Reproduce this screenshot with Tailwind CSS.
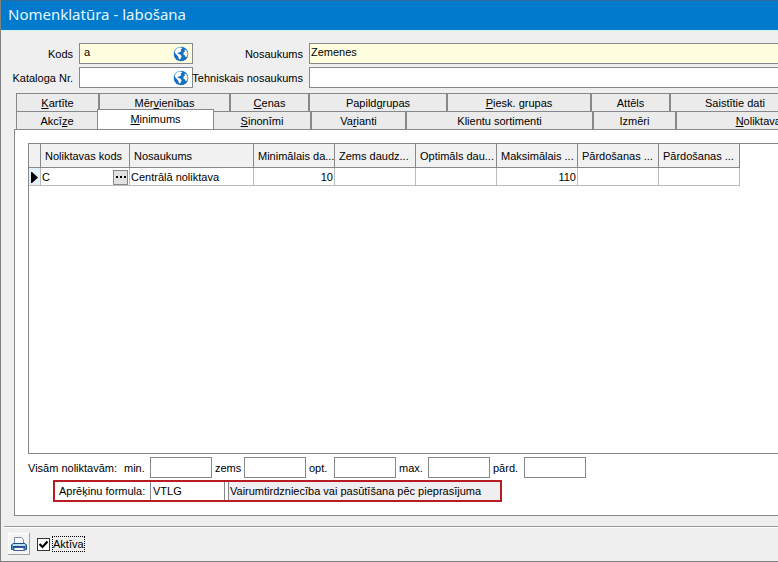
<!DOCTYPE html>
<html lang="lv">
<head>
    <meta charset="UTF-8" />
    <meta name="viewport" content="width=device-width, initial-scale=1.0">
    <title>Nomenklatūra - labošana</title>
    <script src="https://cdn.jsdelivr.net/npm/@tailwindcss/browser@4"></script>
</head>
<body class="h-screen overflow-hidden font-['Liberation_Sans',sans-serif] text-[11px] leading-4 text-black">

    <svg class="hidden">
        <symbol id="globe" viewBox="0 0 16 16">
            <circle cx="8" cy="8" r="7.3" fill="#1a70c0" />
            <path fill="#fff" d="M3.200 3 5.600 1.500 8.400 1.600 9.200 2.800 7.600 3.600 8.200 5 6.800 6.200 5.400 6.400 4.600 7.600 7 8.600 8.600 10 8 12 6.800 13.800 5.800 12.600 5.200 10.600 3.600 8.800 2 7 2 5z" />
            <path fill="#fff" d="M11.400 3.400 13.200 4.200 14.400 6.400 14.600 8.600 13.800 10.800 12.600 11 12 9.400 10.400 8.400 10.600 6.600 12 5.600z" />
        </symbol>
    </svg>

    <div class="flex h-full flex-col border-b border-l border-[#808080] bg-[#efefef]">
        <header class="h-[30px] shrink-0 border-t border-[#2f6a9c] bg-[#007acc] px-[7px]">
            <h1 class="font-['Noto_Sans',sans-serif] text-[15px] leading-[26px] text-[#e4f7ff]">Nomenklatūra - labošana</h1>
        </header>

        <form class="flex min-h-0 flex-1 flex-col border-t border-[#ccf6ff] pt-3">
            <div class="grid shrink-0 grid-cols-[72px_114px_104px_1fr] items-center gap-x-[6px] gap-y-[3px]">
                <label for="kods" class="text-right">Kods</label>
                <div class="flex h-[21px] items-center border border-[#85888c] bg-[#ffffdf] pr-[3px]">
                    <input id="kods" type="text" value="a" class="h-full w-full min-w-0 px-1 pb-1 outline-none">
                    <svg class="size-4 shrink-0"><use href="#globe" /></svg>
                </div>
                <label for="nosaukums" class="text-right whitespace-nowrap">Nosaukums</label>
                <input id="nosaukums" type="text" value="Zemenes" class="h-[21px] w-full border border-r-0 border-[#85888c] bg-[#ffffdf] px-px pb-1 outline-none">

                <label for="katalogs" class="text-right whitespace-nowrap">Kataloga Nr.</label>
                <div class="flex h-[21px] items-center border border-[#85888c] bg-white pr-[3px]">
                    <input id="katalogs" type="text" class="h-full w-full min-w-0 px-1 outline-none">
                    <svg class="size-4 shrink-0"><use href="#globe" /></svg>
                </div>
                <label for="tehniskais" class="flex justify-end whitespace-nowrap">Tehniskais nosaukums</label>
                <input id="tehniskais" type="text" class="h-[21px] w-full border border-r-0 border-[#85888c] bg-white px-px outline-none">
            </div>

            <nav class="mt-[5px] shrink-0 overflow-hidden pl-[15px]">
                <div class="flex h-[18px] *:shrink-0 *:border-t *:border-r-2 *:border-[#85888c] *:bg-[#ebebeb] *:text-center *:leading-[18px]">
                    <button type="button" class="w-[84px] border-l"><u>K</u>artīte</button>
                    <button type="button" class="w-[131px]">Mēr<u>v</u>ienības</button>
                    <button type="button" class="w-[79px]"><u>C</u>enas</button>
                    <button type="button" class="w-[138px]">Papild<u>g</u>rupas</button>
                    <button type="button" class="w-[144px]"><u>P</u>iesk. grupas</button>
                    <button type="button" class="w-[79px]">Attēls</button>
                    <button type="button" class="w-[130px]">Saistītie dati</button>
                </div>
                <div class="flex h-[18px] *:shrink-0 *:border-t *:border-r-2 *:border-[#85888c] *:text-center *:leading-[18px]">
                    <button type="button" class="w-[81px] border-r-0! border-l bg-[#ebebeb]">Akcī<u>z</u>e</button>
                    <button type="button" class="relative z-10 -mt-[2px] h-[21px] w-[117px] border-x! bg-white pb-1"><u>M</u>inimums</button>
                    <button type="button" class="w-[98px] bg-[#ebebeb]"><u>S</u>inonīmi</button>
                    <button type="button" class="w-[95px] bg-[#ebebeb]">Va<u>r</u>ianti</button>
                    <button type="button" class="w-[187px] bg-[#ebebeb]">Klientu sortimenti</button>
                    <button type="button" class="w-[83px] bg-[#ebebeb]">Izmēri</button>
                    <button type="button" class="w-[170px] bg-[#ebebeb]"><u>N</u>oliktavas</button>
                </div>
            </nav>

            <main class="ml-[13px] flex min-h-0 flex-1 flex-col border border-r-0 border-[#85888c] bg-white pt-[13px] pb-[13px] pl-[13px]">
                <div class="min-h-0 flex-1 overflow-hidden border border-r-0 border-[#85888c]">
                    <table class="w-[711px] table-fixed border-separate border-spacing-0">
                        <colgroup>
                            <col class="w-3"><col class="w-[89px]"><col class="w-[124px]"><col class="w-[81px]"><col class="w-[81px]"><col class="w-[81px]"><col class="w-[81px]"><col class="w-[81px]"><col class="w-[81px]">
                        </colgroup>
                        <thead>
                            <tr class="h-6 bg-[#f1f1f1] text-left *:overflow-hidden *:border-r *:border-b *:border-[#85888c] *:pt-px *:pl-1 *:font-normal *:whitespace-nowrap">
                                <th></th>
                                <th>Noliktavas kods</th>
                                <th>Nosaukums</th>
                                <th>Minimālais da...</th>
                                <th>Zems daudz...</th>
                                <th>Optimāls dau...</th>
                                <th>Maksimālais ...</th>
                                <th>Pārdošanas ...</th>
                                <th>Pārdošanas ...</th>
                            </tr>
                        </thead>
                        <tbody>
                            <tr class="h-[18px] *:border-r *:border-b *:border-[#bcbcbc] *:px-px *:pt-px">
                                <td class="bg-[#e4f1fb]">
                                    <svg class="ml-px h-[11px] w-[7px]" viewBox="0 0 7 11"><path d="M0 0h1L7 5.500 1 11H0z" /></svg>
                                </td>
                                <td>
                                    <div class="flex items-center justify-between">
                                        C
                                        <button type="button" aria-label="Izvēlēties" class="flex h-[15px] w-[15px] items-center justify-center border border-[#85888c] bg-[#e1e1e1]">
                                            <svg class="h-[2px] w-[10px]" viewBox="0 0 10 2"><path d="M0 0h2v2H0zM4 0h2v2H4zM8 0h2v2H8z" /></svg>
                                        </button>
                                    </div>
                                </td>
                                <td>Centrālā noliktava</td>
                                <td class="text-right">10</td>
                                <td></td>
                                <td></td>
                                <td class="text-right">110</td>
                                <td></td>
                                <td></td>
                            </tr>
                        </tbody>
                    </table>
                </div>

                <div class="mt-[3px] flex h-[21px] shrink-0 items-center whitespace-nowrap">
                    <span class="w-24">Visām noliktavām:</span>
                    <label for="min" class="w-[26px]">min.</label>
                    <input id="min" type="text" class="h-full w-[62px] border border-[#85888c] px-1 outline-none">
                    <label for="zems" class="w-8 pl-[3px]">zems</label>
                    <input id="zems" type="text" class="h-full w-[62px] border border-[#85888c] px-1 outline-none">
                    <label for="opt" class="w-7 pl-[3px]">opt.</label>
                    <input id="opt" type="text" class="h-full w-[62px] border border-[#85888c] px-1 outline-none">
                    <label for="max" class="w-8 pl-[3px]">max.</label>
                    <input id="max" type="text" class="h-full w-[62px] border border-[#85888c] px-1 outline-none">
                    <label for="pard" class="w-[34px] pl-[3px]">pārd.</label>
                    <input id="pard" type="text" class="h-full w-[62px] border border-[#85888c] px-1 outline-none">
                </div>
                <div class="mt-[2px] ml-[25px] flex h-[22px] w-[449px] shrink-0 items-center border-2 border-[#b81c22] whitespace-nowrap">
                    <label for="formula" class="w-[95px] pl-1">Aprēķinu formula:</label>
                    <input id="formula" type="text" value="VTLG" class="h-full w-[75px] border-x border-[#85888c] px-[2px] outline-none">
                    <input type="text" readonly aria-label="Formulas nosaukums" value="Vairumtirdzniecība vai pasūtīšana pēc pieprasījuma" class="ml-[3px] h-full min-w-0 flex-1 border-l border-[#85888c] bg-[#f0eef0] px-px outline-none">
                </div>
            </main>

            <footer class="mt-[10px] ml-[3px] flex h-[35px] shrink-0 items-center border-t border-[#999] pl-1 shadow-[inset_0_1px_0_#fff]">
                <button type="button" aria-label="Drukāt" class="flex size-[22px] items-center justify-center border-r border-b border-[#a0a0a0] bg-[#f4f4f4] shadow-[inset_1px_1px_0_#fff]">
                    <svg class="h-4 w-[18px]" viewBox="0 0 18 16">
                        <path fill="#fff" stroke="#7d8ea5" d="M4.500 8V1.500h7l2 2V8" />
                        <path fill="#4f9ada" stroke="#1d4f8c" d="M3 7.500h12l1.500 1.500v4.500h-15V9z" />
                        <path fill="#b9dcf7" d="M3 8h12v2H3z" />
                        <path fill="#1b4a86" d="M3 10h12v2H3z" />
                        <path fill="#fff" stroke="#3a5f8d" d="M4.500 11.500h9l1 3h-11z" />
                    </svg>
                </button>
                <div class="ml-[7px] flex items-center gap-[2px]">
                    <span class="relative flex size-[13px]">
                        <input id="aktiva" type="checkbox" checked class="size-[13px] appearance-none border border-[#333] bg-white">
                        <svg class="pointer-events-none absolute inset-0 size-[13px]" viewBox="0 0 13 13"><path d="M2.500 6 5.500 9 10.500 3.500" fill="none" stroke="#000" stroke-width="2.200" /></svg>
                    </span>
                    <label for="aktiva" class="border border-dotted border-black leading-[14px]">Aktīva</label>
                </div>
            </footer>
        </form>
    </div>

</body>
</html>
